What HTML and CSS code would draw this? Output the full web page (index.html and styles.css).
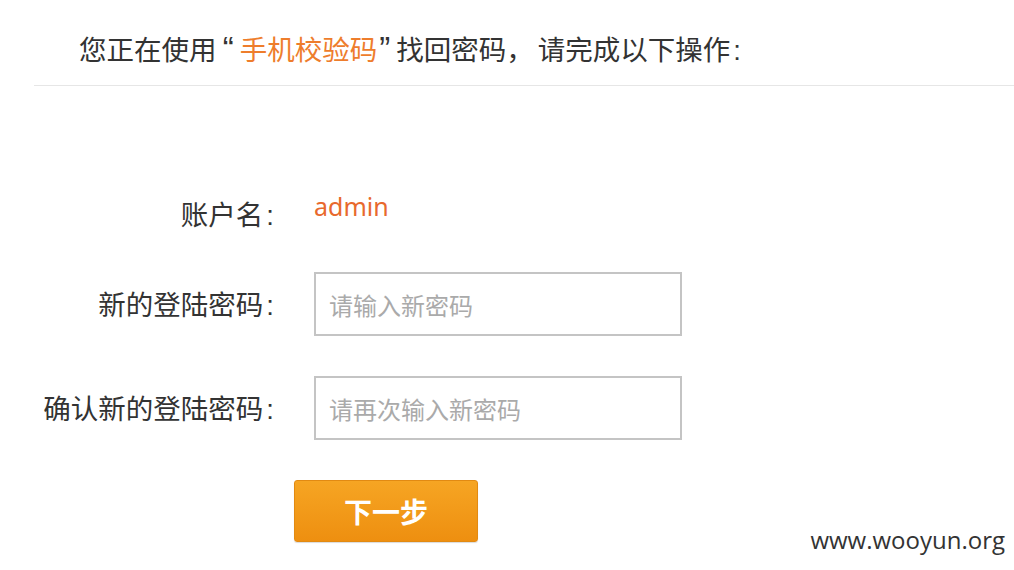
FILE: index.html
```html
<!DOCTYPE html>
<html lang="zh-CN">
<head>
<meta charset="utf-8">
<title>找回密码</title>
<link rel="stylesheet" href="styles.css">
</head>
<body>
<div class="page">
  <div class="head">您正在使用 <span class="q q-open">“</span><span class="hl">手机校验码</span><span class="q q-close">”</span> 找回密码<span class="cm">，</span>请完成以下操作<span class="c">:</span></div>
  <form class="form">
    <div class="row row-user">
      <label class="lbl">账户名<span class="c">:</span></label>
      <span class="user">admin</span>
    </div>
    <div class="row">
      <label class="lbl">新的登陆密码<span class="c">:</span></label>
      <input class="inp" type="password" placeholder="请输入新密码">
    </div>
    <div class="row">
      <label class="lbl">确认新的登陆密码<span class="c">:</span></label>
      <input class="inp" type="password" placeholder="请再次输入新密码">
    </div>
    <div class="row-btn">
      <button type="button" class="btn">下一步</button>
    </div>
  </form>
  <div class="mark">www.wooyun.org</div>
</div>
</body>
</html>
```
FILE: styles.css
```css
html, body {
  margin: 0;
  padding: 0;
  background: #fff;
}
body {
  font-family: "Noto Sans CJK SC", "Noto Sans", sans-serif;
  color: #333;
  width: 1014px;
  height: 570px;
  overflow: hidden;
}
.page {
  position: relative;
  height: 570px;
}
.head {
  margin-left: 34px;
  padding: 30px 0 0 45px;
  box-sizing: border-box;
  font-size: 27.5px;
  line-height: 36px;
  height: 86px;
  border-bottom: 1px solid #e6e6e6;
  white-space: nowrap;
}
.q {
  font-family: "Liberation Sans", sans-serif;
  font-size: 33px;
  line-height: 0;
}
.q-open { padding-right: 6px; }
.q-close { padding-left: 2px; }
.cm { padding-right: 4px; }
.c {
  font-family: "Liberation Sans", sans-serif;
  margin-left: 3px;
}
.lbl .c { margin-right: 2px; }
.hl { color: #ee7d2c; }
.form {
  display: flex;
  flex-direction: column;
  padding-top: 110px;
}
.row {
  display: flex;
  align-items: center;
  height: 64px;
  margin-bottom: 40px;
}
.row-user {
  align-items: flex-start;
  margin-top: -28px;
}
.lbl {
  width: 276px;
  text-align: right;
  font-size: 27.5px;
  line-height: 32px;
  flex-shrink: 0;
  white-space: nowrap;
}
.row-user .lbl { padding-top: 29px; }
.user {
  margin-left: 38px;
  padding-top: 22px;
  font-family: "Noto Sans", "Open Sans", sans-serif;
  font-size: 25px;
  line-height: 32px;
  color: #e8692d;
}
.inp {
  margin-left: 38px;
  width: 368px;
  height: 64px;
  box-sizing: border-box;
  border: 2px solid #c4c4c4;
  padding: 0 13px;
  font-family: "Noto Sans CJK SC", sans-serif;
  font-size: 24px;
  color: #333;
  outline: none;
  background: #fff;
}
.inp::placeholder { color: #aaa; }
.row-btn {
  padding-left: 294px;
}
.btn {
  width: 184px;
  height: 62px;
  border: 1px solid #e28a12;
  border-radius: 3px;
  background: linear-gradient(#f6a523, #ee8f10);
  color: #fff;
  font-family: "Noto Sans CJK SC", sans-serif;
  font-weight: 700;
  font-size: 28px;
  box-shadow: 0 1px 1px rgba(0,0,0,0.15);
  padding: 0;
}
.mark {
  position: absolute;
  right: 9px;
  bottom: 14px;
  font-family: "Open Sans", "Noto Sans", sans-serif;
  font-size: 24px;
  color: #333;
}
```
